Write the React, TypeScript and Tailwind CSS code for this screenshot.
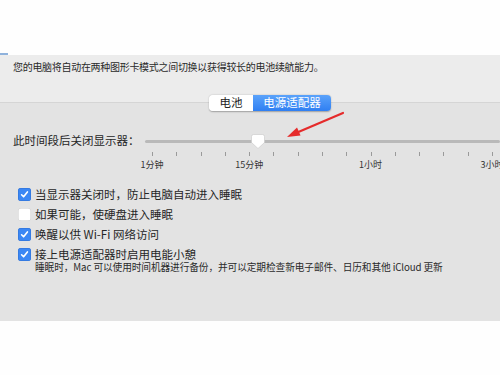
import React from 'react';

const FONT = { fontFamily: '"Noto Sans CJK SC", "Noto Sans", sans-serif' };

const TICKS = Array.from({ length: 15 }, (_, i) => i);
const TICK_LABELS = [
  { index: 0, label: '1分钟' },
  { index: 4, label: '15分钟' },
  { index: 9, label: '1小时' },
  { index: 14, label: '3小时' },
];

const Checkbox: React.FC<{ checked?: boolean }> = ({ checked = false }) =>
  checked ? (
    <span className="flex h-[13px] w-[13px] shrink-0 items-center justify-center rounded-[3px] bg-[#3b87f4] shadow-[inset_0_0_0_0.5px_#2f6fd0]">
      <svg width="9" height="9" viewBox="0 0 9 9">
        <path d="M1.6 4.8 L3.6 6.8 L7.4 1.9" fill="none" stroke="#fff" strokeWidth="1.6" strokeLinecap="round" strokeLinejoin="round" />
      </svg>
    </span>
  ) : (
    <span className="h-[13px] w-[13px] shrink-0 rounded-[3px] bg-white shadow-[inset_0_0_0_0.5px_#c9c9c9]" />
  );

const CheckRow: React.FC<{ checked?: boolean; label: string }> = ({ checked, label }) => (
  <div className="flex h-[20px] items-center gap-[4px] pl-[18px]">
    <Checkbox checked={checked} />
    <span className="text-[11.5px] leading-[13px] text-[#262626]">{label}</span>
  </div>
);

const Slider: React.FC = () => {
  // tick spacing over the run from the first to the last tick
  const step = 340 / 14;
  return (
    <div className="relative h-[40px] w-[355px] shrink-0">
      <div className="mt-[7px] h-[3px] w-full rounded-full bg-[#b9b9b9]" />
      <div className="ml-[7px] mt-[9px] flex h-[4px] w-[341px] justify-between">
        {TICKS.map((t) => (
          <span key={t} className="h-[4px] w-px bg-[#9a9a9a]" />
        ))}
      </div>
      {TICK_LABELS.map((t) => (
        <span
          key={t.index}
          className="absolute top-[26px] -translate-x-1/2 whitespace-nowrap text-[9px] leading-[12px] text-[#333]"
          style={{ left: 7 + t.index * step }}
        >
          {t.label}
        </span>
      ))}
      <svg className="absolute left-[106px] top-[1px]" width="14" height="15" viewBox="0 0 14 15">
        <path
          d="M2.5 0.5 H11.5 Q13.5 0.5 13.5 2.5 V8.5 L7 14.5 L0.5 8.5 V2.5 Q0.5 0.5 2.5 0.5 Z"
          fill="#fff"
          stroke="#c8c8c8"
          strokeWidth="0.6"
        />
      </svg>
    </div>
  );
};

export default function App() {
  return (
    <div className="relative h-[375px] w-[500px] overflow-hidden bg-[#fefefe]" style={FONT}>
      <div className="flex h-[55px] items-end">
        <span className="h-[2px] w-[8px] bg-[#8fb2dc]" />
      </div>

      <div className="h-[48px] border-b border-[#d5d5d5] bg-[#ececec] px-[13px] pt-[5px]">
        <p className="text-[10px] leading-[14px] tracking-[-0.3px] text-[#2a2a2a]">
          您的电脑将自动在两种图形卡模式之间切换以获得较长的电池续航能力。
        </p>
      </div>

      <div className="flex h-[218px] flex-col bg-[#e3e3e3]">
        <div className="relative -mt-[8px] ml-[209px] flex h-[16px] w-[122px] shrink-0 overflow-hidden rounded-[4px] shadow-[0_0.5px_1.5px_rgba(0,0,0,0.3)]">
          <span className="flex w-[44px] items-center justify-center bg-white text-[11.5px] text-[#222]">电池</span>
          <span className="flex flex-1 items-center justify-center bg-gradient-to-b from-[#5aa2fa] to-[#2f7ff2] text-[11.5px] text-white">
            电源适配器
          </span>
        </div>

        <div className="mt-[22px] flex">
          <span className="w-[145px] shrink-0 pl-[13px] text-[11.5px] leading-[14px] text-[#262626]">此时间段后关闭显示器：</span>
          <Slider />
        </div>

        <div className="mt-[11px]">
          <CheckRow checked label="当显示器关闭时，防止电脑自动进入睡眠" />
          <CheckRow label="如果可能，使硬盘进入睡眠" />
          <CheckRow checked label="唤醒以供 Wi-Fi 网络访问" />
          <CheckRow checked label="接上电源适配器时启用电能小憩" />
          <p className="-mt-[3px] pl-[35px] text-[9.7px] leading-[12px] tracking-[-0.1px] text-[#2a2a2a]">
            睡眠时，Mac 可以使用时间机器进行备份，并可以定期检查新电子邮件、日历和其他 iCloud 更新
          </p>
        </div>
      </div>

      <svg className="absolute left-[280px] top-[108px]" width="70" height="34" viewBox="0 0 70 34">
        <path d="M63 5 L16 25" stroke="#e52b2b" strokeWidth="2.2" strokeLinecap="round" />
        <path d="M7 29 L17 19.5 L20.5 27.5 Z" fill="#e52b2b" />
      </svg>
    </div>
  );
}
